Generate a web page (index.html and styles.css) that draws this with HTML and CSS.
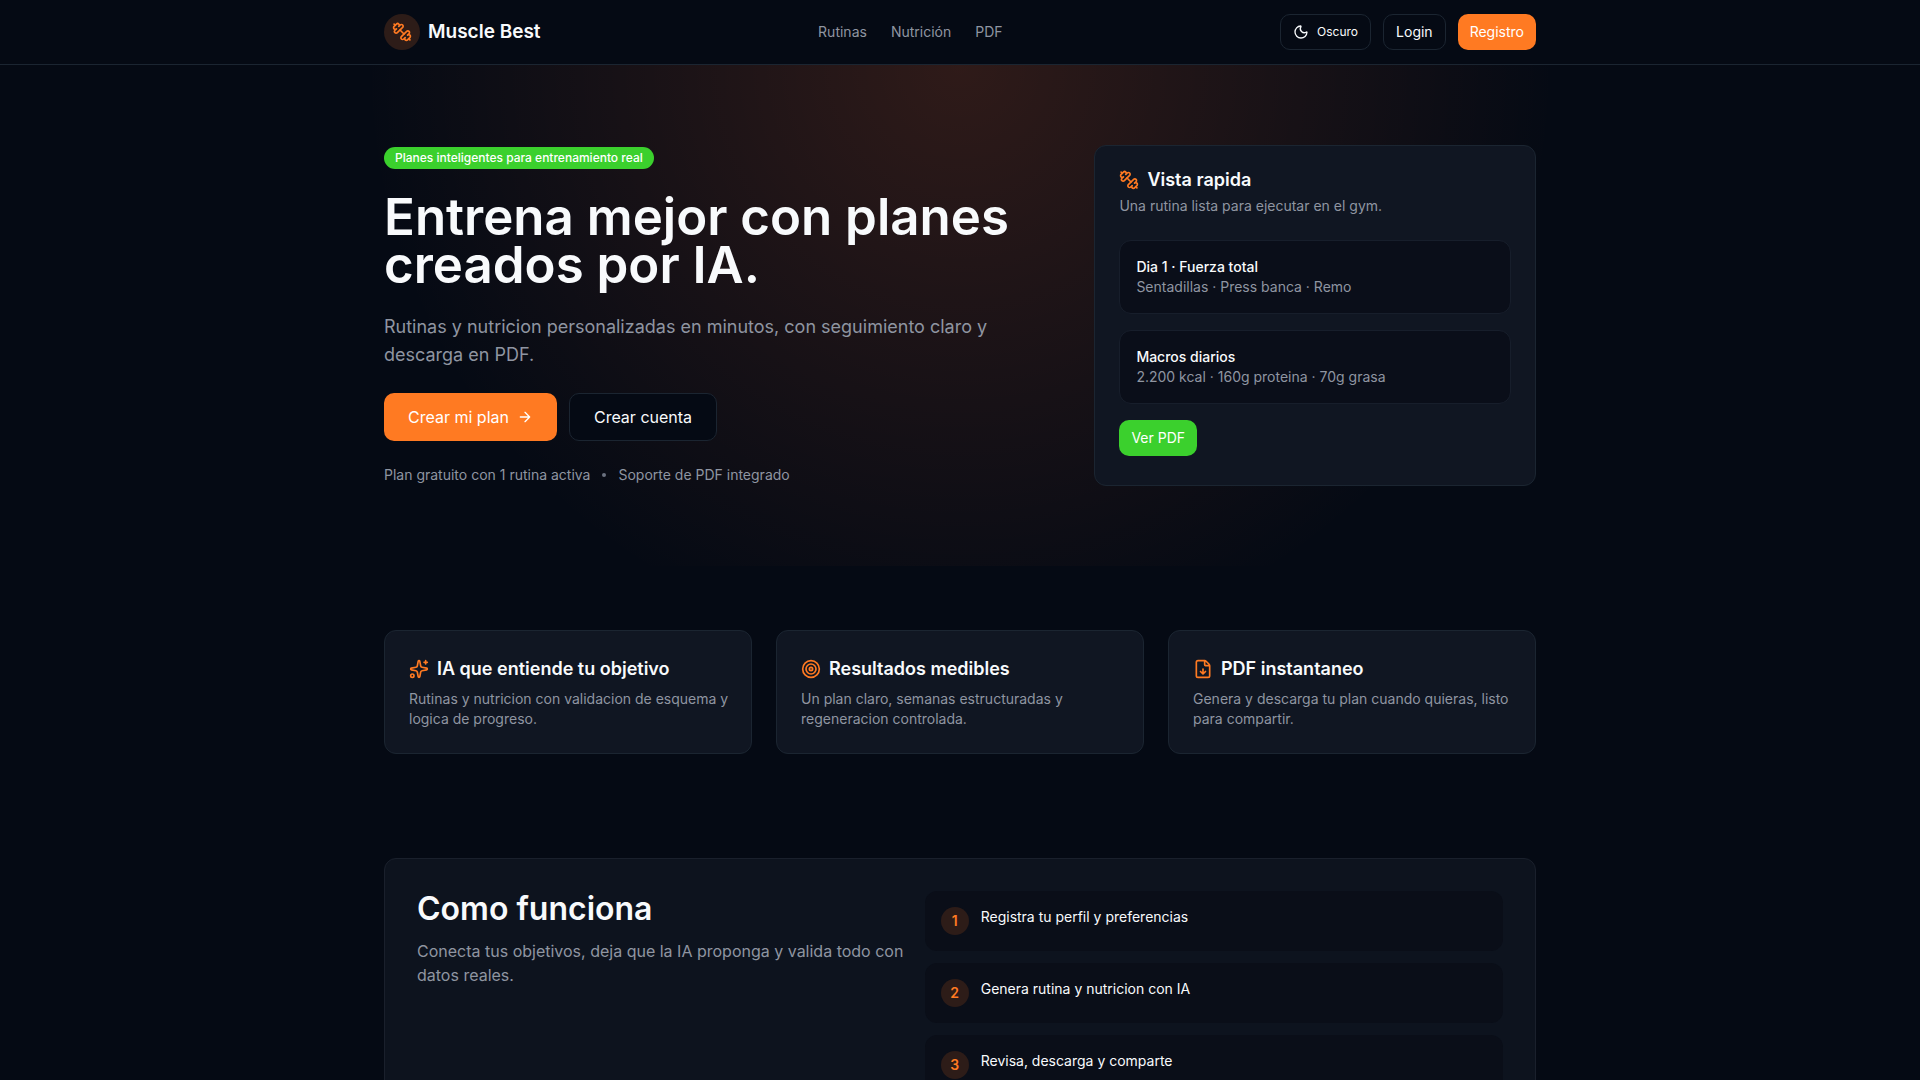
FILE: index.html
```html
<!DOCTYPE html>
<html lang="es">
<head>
<meta charset="utf-8">
<meta name="viewport" content="width=device-width, initial-scale=1">
<title>Muscle Best</title>
<link rel="stylesheet" href="styles.css">
</head>
<body>
<svg class="sprite" aria-hidden="true">
  <symbol id="dumbbell" viewBox="0 0 24 24">
    <path d="M14.4 14.4 9.6 9.6"/>
    <path d="M18.657 21.485a2 2 0 1 1-2.829-2.828l-1.767 1.768a2 2 0 1 1-2.829-2.829l6.364-6.364a2 2 0 1 1 2.829 2.829l-1.768 1.767a2 2 0 1 1 2.828 2.829z"/>
    <path d="m21.5 21.5-1.4-1.4"/>
    <path d="M3.9 3.9 2.5 2.5"/>
    <path d="M6.404 12.768a2 2 0 1 1-2.829-2.829l1.768-1.767a2 2 0 1 1-2.828-2.829l2.828-2.828a2 2 0 1 1 2.829 2.828l1.767-1.768a2 2 0 1 1 2.829 2.829z"/>
  </symbol>
</svg>

<header class="site-header">
  <div class="container header-row">
    <a class="brand" href="#"><span class="brand-mark"><svg class="icon icon-lg"><use href="#dumbbell"/></svg></span>Muscle Best</a>
    <nav class="nav" aria-label="Principal">
      <a href="#rutinas">Rutinas</a>
      <a href="#nutricion">Nutrición</a>
      <a href="#pdf">PDF</a>
    </nav>
    <div class="actions">
      <button class="btn btn-outline btn-theme" type="button"><svg class="icon icon-sm" viewBox="0 0 24 24"><path d="M20.985 12.486a9 9 0 1 1-9.473-9.472c.405-.022.617.46.402.803a6 6 0 0 0 8.268 8.268c.344-.215.825-.004.803.401"/></svg>Oscuro</button>
      <a class="btn btn-outline" href="#login">Login</a>
      <a class="btn btn-primary" href="#registro">Registro</a>
    </div>
  </div>
</header>

<main>
  <section class="hero">
    <div class="container hero-grid">
      <div class="hero-copy">
        <span class="badge">Planes inteligentes para entrenamiento real</span>
        <h1>Entrena mejor con planes creados por IA.</h1>
        <p class="lead">Rutinas y nutricion personalizadas en minutos, con seguimiento claro y descarga en PDF.</p>
        <div class="cta">
          <a class="btn btn-primary btn-lg" href="#crear">Crear mi plan<svg class="icon icon-sm" viewBox="0 0 24 24"><path d="M5 12h14M12 5l7 7-7 7"/></svg></a>
          <a class="btn btn-outline btn-lg" href="#cuenta">Crear cuenta</a>
        </div>
        <div class="notes"><span>Plan gratuito con 1 rutina activa</span><span class="dot"></span><span>Soporte de PDF integrado</span></div>
      </div>
      <aside class="card preview">
        <div class="card-head">
          <h2 class="card-title"><svg class="icon icon-lg"><use href="#dumbbell"/></svg>Vista rapida</h2>
          <p>Una rutina lista para ejecutar en el gym.</p>
        </div>
        <div class="tile"><strong>Dia 1 · Fuerza total</strong><p>Sentadillas · Press banca · Remo</p></div>
        <div class="tile"><strong>Macros diarios</strong><p>2.200 kcal · 160g proteina · 70g grasa</p></div>
        <a class="btn btn-success" href="#pdf">Ver PDF</a>
      </aside>
    </div>
  </section>

  <section class="container features">
    <article class="card feature" id="rutinas">
      <h2 class="card-title"><svg class="icon icon-lg" viewBox="0 0 24 24"><path d="M11.017 2.814a1 1 0 0 1 1.966 0l1.051 5.558a2 2 0 0 0 1.594 1.594l5.558 1.051a1 1 0 0 1 0 1.966l-5.558 1.051a2 2 0 0 0-1.594 1.594l-1.051 5.558a1 1 0 0 1-1.966 0l-1.051-5.558a2 2 0 0 0-1.594-1.594l-5.558-1.051a1 1 0 0 1 0-1.966l5.558-1.051a2 2 0 0 0 1.594-1.594zM20 2v4M22 4h-4"/><circle cx="4" cy="20" r="2"/></svg>IA que entiende tu objetivo</h2>
      <p>Rutinas y nutricion con validacion de esquema y logica de progreso.</p>
    </article>
    <article class="card feature" id="nutricion">
      <h2 class="card-title"><svg class="icon icon-lg" viewBox="0 0 24 24"><circle cx="12" cy="12" r="10"/><circle cx="12" cy="12" r="6"/><circle cx="12" cy="12" r="2"/></svg>Resultados medibles</h2>
      <p>Un plan claro, semanas estructuradas y regeneracion controlada.</p>
    </article>
    <article class="card feature" id="pdf">
      <h2 class="card-title"><svg class="icon icon-lg" viewBox="0 0 24 24"><path d="M6 22a2 2 0 0 1-2-2V4a2 2 0 0 1 2-2h8a2.400 2.400 0 0 1 1.704.706l3.588 3.588A2.400 2.400 0 0 1 20 8v12a2 2 0 0 1-2 2zM14 2v5a1 1 0 0 0 1 1h5M12 18v-6M9 15l3 3 3-3"/></svg>PDF instantaneo</h2>
      <p>Genera y descarga tu plan cuando quieras, listo para compartir.</p>
    </article>
  </section>

  <section class="container how">
    <div class="how-panel">
      <div>
        <h2>Como funciona</h2>
        <p>Conecta tus objetivos, deja que la IA proponga y valida todo con datos reales.</p>
      </div>
      <ol class="steps">
        <li><span class="num">1</span>Registra tu perfil y preferencias</li>
        <li><span class="num">2</span>Genera rutina y nutricion con IA</li>
        <li><span class="num">3</span>Revisa, descarga y comparte</li>
      </ol>
    </div>
  </section>
</main>
</body>
</html>
```
FILE: styles.css
```css
:root {
  --bg: #050a14;
  --card: #101622;
  --border: #1b2531;
  --text: #f8fafc;
  --muted: #8f95a1;
  --orange: #ff7a22;
  --green: #3bd02d;
  --body-font: Inter, "Noto Sans", sans-serif;
}
* { box-sizing: border-box; }
body {
  margin: 0;
  background: var(--bg);
  color: var(--text);
  font: 14px/20px var(--body-font);
}
h1, h2, p, ol { margin: 0; padding: 0; }
a { color: inherit; text-decoration: none; }
.sprite { display: none; }
.container {
  width: 100%;
  max-width: 1200px;
  margin: 0 auto;
  padding: 0 24px;
}
.icon {
  flex: none;
  fill: none;
  stroke: currentColor;
  stroke-width: 2;
  stroke-linecap: round;
  stroke-linejoin: round;
}
.icon-sm { width: 16px; height: 16px; }
.icon-lg { width: 20px; height: 20px; }

.site-header { border-bottom: 1px solid var(--border); }
.header-row {
  display: flex;
  align-items: center;
  justify-content: space-between;
  height: 64px;
}
.brand { display: flex; align-items: center; gap: 8px; font-size: 19px; font-weight: 600; }
.brand-mark {
  display: grid;
  place-items: center;
  width: 36px;
  height: 36px;
  border-radius: 50%;
  background: #2d1c18;
  color: var(--orange);
}
.nav { display: flex; gap: 24px; color: var(--muted); }
.actions { display: flex; gap: 12px; }
.btn {
  display: inline-flex;
  align-items: center;
  justify-content: center;
  gap: 8px;
  height: 36px;
  padding: 0 12px;
  border: 0;
  border-radius: 10px;
  font: 400 14px/20px var(--body-font);
}
.btn-outline { border: 1px solid var(--border); background: var(--bg); color: var(--text); }
.btn-primary { background: var(--orange); color: #fff; }
.btn-success { background: var(--green); color: #fff; }
.btn-theme { font-size: 12px; }
.btn-lg { height: 48px; padding: 0 24px; font-size: 16px; }

.hero {
  padding: 80px 0;
  background: radial-gradient(circle at top, rgba(255, 108, 48, .17), transparent 55%);
}
.hero-grid {
  display: grid;
  grid-template-columns: 3fr 2fr;
  align-items: center;
  gap: 48px;
}
.hero-copy { display: flex; flex-direction: column; align-items: flex-start; gap: 24px; }
.badge {
  padding: 3px 11px;
  border-radius: 11px;
  background: var(--green);
  color: #fff;
  font-size: 12px;
  font-weight: 500;
  line-height: 16px;
}
h1 { font-size: 51px; font-weight: 600; line-height: 48px; }
.lead { max-width: 640px; color: var(--muted); font-size: 18px; line-height: 28px; }
.cta { display: flex; gap: 12px; }
.notes { display: flex; align-items: center; gap: 12px; color: var(--muted); }
.dot { width: 4px; height: 4px; border-radius: 50%; background: #6b7280; }

.card {
  border: 1px solid var(--border);
  border-radius: 12px;
  background: var(--card);
}
.card p { color: var(--muted); }
.card-title { display: flex; align-items: center; gap: 8px; font-size: 18px; font-weight: 600; line-height: 28px; }
.card-title .icon { color: var(--orange); }
.preview { display: flex; flex-direction: column; align-items: flex-start; gap: 16px; padding: 20px 24px 29px; }
.card-head { display: grid; gap: 2px; padding-bottom: 8px; }
.tile {
  width: 100%;
  min-height: 74px;
  padding: 16px;
  border: 1px solid #171e2b;
  border-radius: 12px;
  background: #0a0e19;
}
.tile strong { display: block; font-weight: 500; }

.features { display: grid; grid-template-columns: repeat(3, 1fr); gap: 24px; padding-top: 64px; padding-bottom: 64px; }
.feature { padding: 24px 16px 24px 24px; }
.feature p { padding-top: 6px; }

.how { padding-top: 40px; padding-bottom: 64px; }
.how-panel {
  display: grid;
  grid-template-columns: 6fr 7fr;
  gap: 12px;
  padding: 32px;
  border: 1px solid #1a202c;
  border-radius: 12px;
  background: #0d131e;
}
.how-panel h2 { font-size: 32px; font-weight: 600; line-height: 36px; }
.how-panel p { padding-top: 12px; color: var(--muted); font-size: 16px; line-height: 24px; }
.steps { display: grid; gap: 12px; list-style: none; }
.steps li { display: flex; gap: 12px; padding: 16px; border-radius: 12px; background: #0a0e18; }
.num {
  display: grid;
  place-items: center;
  width: 28px;
  height: 28px;
  border-radius: 50%;
  background: #2d1c18;
  color: var(--orange);
  font-weight: 600;
}
```
